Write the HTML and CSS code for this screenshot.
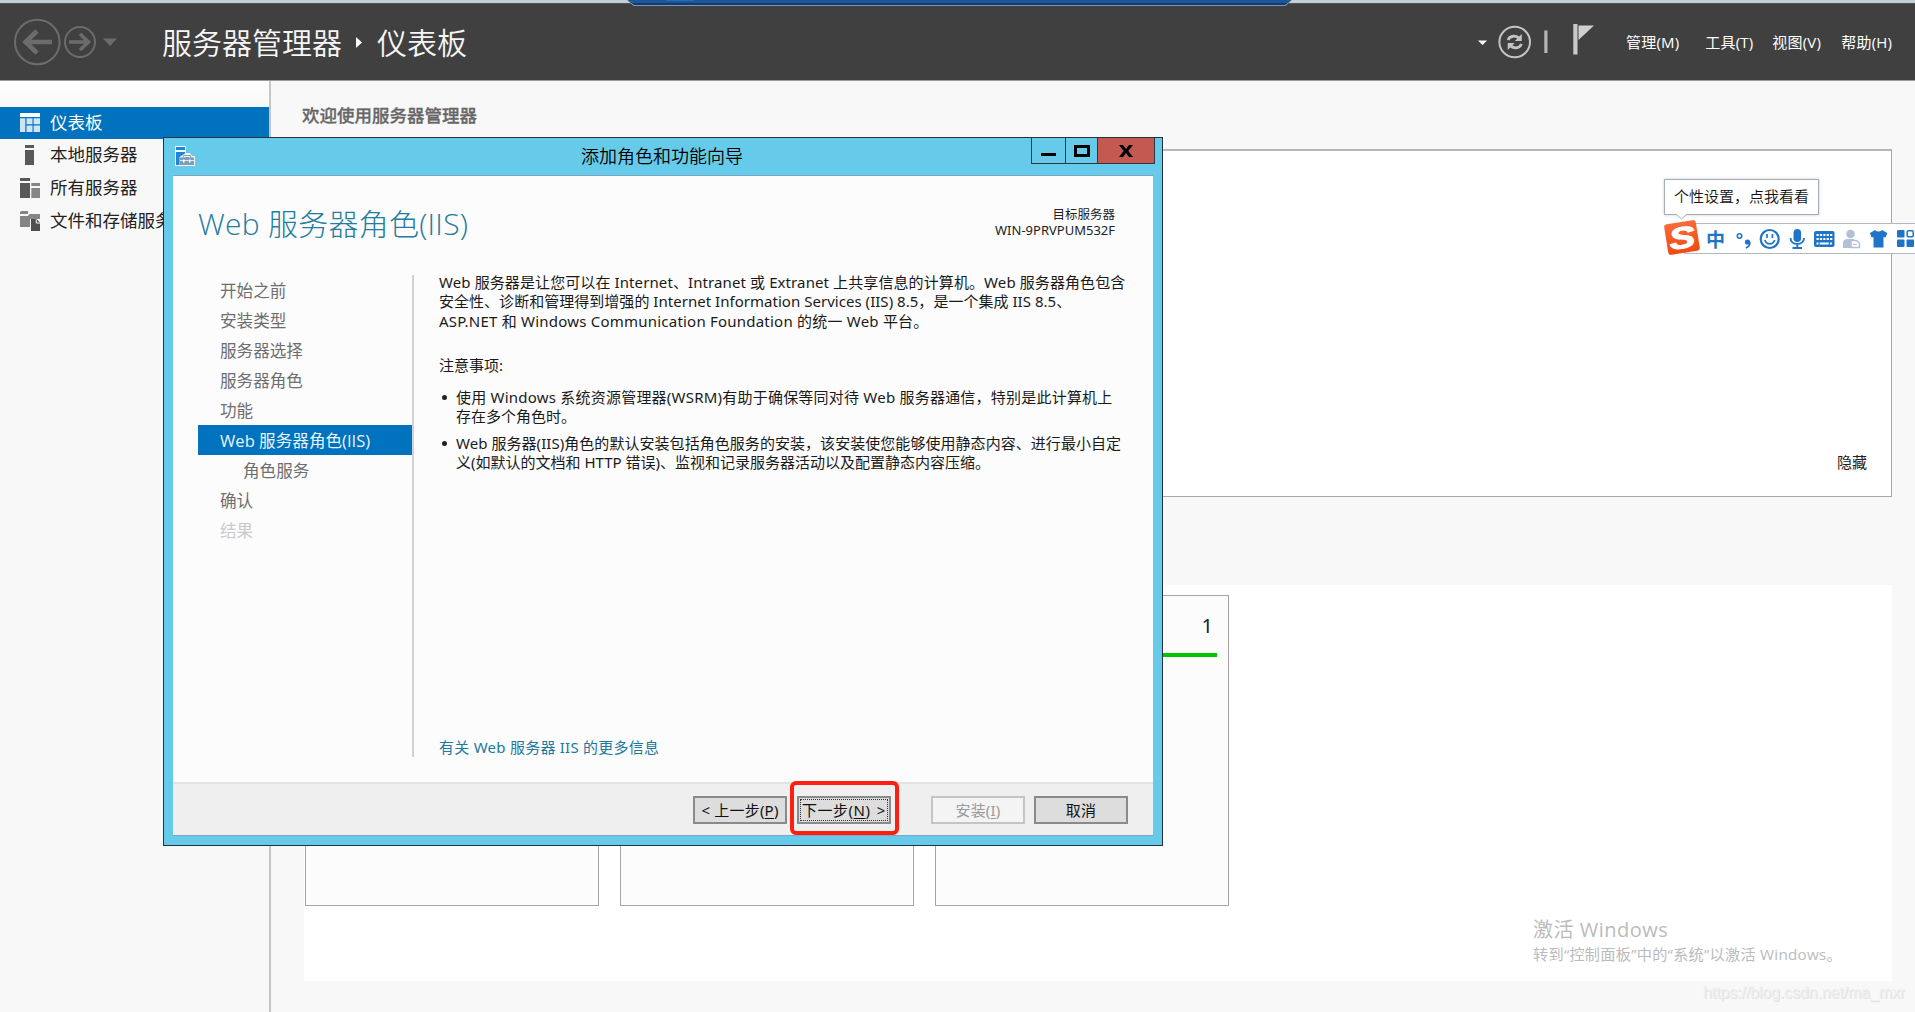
FILE: index.html
```html
<!DOCTYPE html>
<html lang="zh-CN">
<head>
<meta charset="utf-8">
<title>服务器管理器</title>
<link rel="stylesheet" href="styles.css">
</head>
<body>
<div class="screen">
  <svg class="session-tab" width="666" height="7" viewBox="0 0 666 7">
    <path d="M0 0H665L658.500 6H6.500Z" fill="#7d97b8"/>
    <path d="M1 0H664L658 5H7Z" fill="#143a70"/>
    <path d="M1 0H664L661 3H4Z" fill="#1f5694"/>
    <rect x="39" y="0" width="28" height="1" fill="#1b6fc2"/>
  </svg>

  <header class="topbar">
    <svg class="nav-arrows" width="110" height="50" viewBox="0 0 110 50" fill="none" stroke="#6c6c6c">
      <circle cx="27.300" cy="25" r="22.300" stroke-width="2"/>
      <path d="M42 25H15M27 14L15.500 25L27 36" stroke-width="4.600"/>
      <circle cx="70" cy="25" r="15" stroke-width="2"/>
      <path d="M59 25H78M70 17L78.500 25L70 33" stroke-width="3.600"/>
      <path d="M93 21.500H107L100 29Z" fill="#6c6c6c" stroke="none"/>
    </svg>
    <div class="crumbs">
      <span>服务器管理器</span>
      <svg width="6" height="11" viewBox="0 0 6 11"><path d="M0 0L6 5.500L0 11Z" fill="#fff"/></svg>
      <span>仪表板</span>
    </div>
    <svg class="tools" width="120" height="40" viewBox="0 0 120 40">
      <path d="M2 18.500H11L6.500 23Z" fill="#fff"/>
      <g fill="none" stroke="#c4c4c4">
        <circle cx="38.700" cy="20" r="15.300" stroke-width="2"/>
        <path d="M32 18C34 13.500 40 12.800 43.500 17M45.500 22C43.500 26.500 37.500 27.200 34 23" stroke-width="2.800"/>
      </g>
      <path d="M45.800 12V19H38.800ZM31.700 28V21H38.700Z" fill="#c4c4c4"/>
      <rect x="68.300" y="8.500" width="3.200" height="22.500" fill="#b5b5b5"/>
      <rect x="97.300" y="2" width="4.200" height="30.500" fill="#c9c9c9"/>
      <path d="M102.500 3.500H118L102.500 18Z" fill="#d0d0d0"/>
    </svg>
    <nav class="menus">
      <span class="m1">管理(M)</span><span class="m2">工具(T)</span><span class="m3">视图(V)</span><span class="m4">帮助(H)</span>
    </nav>
  </header>

  <div class="body">
    <aside class="sidebar">
      <div class="side-item active">
        <svg width="20" height="19" viewBox="0 0 20 19"><path d="M0 0H20V4H0Z" fill="#fff"/><path d="M0 5.300H5.300V19H0ZM6.500 5.300H12.500V11.300H6.500ZM13.600 5.300H20V11.300H13.600ZM6.500 12.500H12.500V19H6.500ZM13.600 12.500H20V19H13.600Z" fill="#cfe4f5"/></svg>
        <span>仪表板</span>
      </div>
      <div class="side-item">
        <svg width="20" height="20" viewBox="0 0 20 20"><path d="M5 0H14V3H5ZM5 5H14V20H5Z" fill="#595959"/></svg>
        <span>本地服务器</span>
      </div>
      <div class="side-item">
        <svg width="20" height="20" viewBox="0 0 20 20"><path d="M0 0H10V3H0ZM0 5H10V20H0Z" fill="#595959"/><path d="M11.300 5H20V8H11.300ZM11.300 10H20V20H11.300Z" fill="#858585"/></svg>
        <span>所有服务器</span>
      </div>
      <div class="side-item">
        <svg width="20" height="20" viewBox="0 0 20 20"><path d="M0 1.500L1 0H8V3H0ZM0 5H8L9.300 3H20V8H10V16H0Z" fill="#858585"/><path d="M11 8H16.500L20 11.500V20H11Z" fill="#4f4f4f"/><path d="M16.300 8.500V12H20" fill="none" stroke="#f8f8f8" stroke-width="1"/></svg>
        <span>文件和存储服务</span>
      </div>
    </aside>

    <main class="main">
      <h2 class="welcome">欢迎使用服务器管理器</h2>
      <section class="panel"><span class="hide-link">隐藏</span></section>
      <section class="groups">
        <div class="tiles">
          <div class="tile"></div>
          <div class="tile"></div>
          <div class="tile"><span class="count">1</span><div class="ok-bar"></div></div>
        </div>
      </section>
    </main>
  </div>

  <div class="activate">
    <div class="act-title">激活 Windows</div>
    <div class="act-text">转到“控制面板”中的“系统”以激活 Windows。</div>
  </div>
  <div class="blog-url">https://blog.csdn.net/ma_mxr</div>

  <div class="ime">
    <div class="ime-tip">个性设置，点我看看</div>
    <svg class="tip-arrow" width="12" height="6" viewBox="0 0 12 6"><path d="M0 0L5.500 5L11 0" fill="#fff" stroke="#a4adb8"/></svg>
    <div class="ime-bar">
      <span class="zh">中</span>
      <svg class="ime-icons" width="180" height="22" viewBox="0 0 180 22">
        <circle cx="4.500" cy="8" r="2.200" fill="none" stroke="#1f74c8" stroke-width="1.600"/>
        <circle cx="12.500" cy="14" r="2.600" fill="#1f74c8"/><path d="M14.800 13.500Q15.500 18 10.800 20" fill="none" stroke="#1f74c8" stroke-width="1.600"/>
        <circle cx="34.700" cy="11" r="9" fill="none" stroke="#1f74c8" stroke-width="2.200"/>
        <path d="M32 6V10M37.400 6V10M29.800 12C31.500 17.200 38 17.200 39.700 12" fill="none" stroke="#1f74c8" stroke-width="1.700"/>
        <rect x="58.500" y="1" width="7.600" height="13" rx="3.800" fill="#1f74c8"/>
        <path d="M55.500 10C55.500 18 69 18 69 10M62.300 16V19.500M57.500 20H67" fill="none" stroke="#1f74c8" stroke-width="1.900"/>
        <rect x="79" y="3" width="20.500" height="16" rx="2" fill="#1f74c8"/>
        <path d="M81.500 7H97.500M81.500 11H97.500" stroke="#fff" stroke-width="2.200" stroke-dasharray="2.200 1.200"/><path d="M81.500 15.500H97.500" stroke="#fff" stroke-width="1.800" stroke-dasharray="2 1.200 9 1.200"/>
        <g fill="#b4c0d6"><circle cx="115.500" cy="6" r="4.300"/><path d="M108 20V15Q108 11 113 11H119V20Z"/></g>
        <path d="M116 12.500H121.500L124.500 15V19.500H116Z" fill="#fff" stroke="#b4c0d6" stroke-width="1.500"/><path d="M118 16.500H122" stroke="#b4c0d6"/>
        <path d="M135 5L140 2Q143.500 5 147 2L152.300 5L150.500 9.500L148.500 9V19.500H138.500V9L136.500 9.500Z" fill="#1f74c8"/>
        <g fill="#1f74c8"><rect x="162" y="2" width="7.500" height="7.500" rx="1"/><rect x="162" y="11.500" width="7.500" height="7.500" rx="1"/><rect x="171.500" y="11.500" width="7.500" height="7.500" rx="1"/></g>
        <rect x="172.200" y="2.700" width="6" height="6" rx="1" fill="none" stroke="#1f74c8" stroke-width="1.500"/>
      </svg>
    </div>
    <div class="sogou"><span>S</span></div>
  </div>

  <div class="wizard">
    <div class="titlebar">
      <svg class="wiz-icon" width="20" height="20" viewBox="0 0 20 20">
        <path d="M0 0H11V7H15L17 10H20V20H0Z" fill="#eef7fc"/>
        <path d="M1 1H10V4H1ZM1 6H10V7.500L4.500 11V19H1Z" fill="#1f86d6"/>
        <path d="M4.500 11.500H7.500L8.500 9H15.500L16.500 11.500H19V19H4.500Z" fill="#7f9db5"/><path d="M9 11.500V10.500H14.500V11.500" stroke="#fff" fill="none"/><path d="M5 14.500H19" stroke="#dce8f0"/><rect x="8" y="13.500" width="1.500" height="3" fill="#fff"/><rect x="14" y="13.500" width="1.500" height="3" fill="#fff"/>
      </svg>
      <span class="wiz-title">添加角色和功能向导</span>
      <div class="controls">
        <div class="ctl min"><i></i></div>
        <div class="ctl max"><i></i></div>
        <div class="ctl close"><svg width="14" height="12" viewBox="0 0 14 12"><path d="M0 0H4L7 4L10 0H14L9.300 6L14 12H10L7 8L4 12H0L4.700 6Z"/></svg></div>
      </div>
    </div>
    <div class="sheet">
      <div class="head">
        <h1>Web 服务器角色(IIS)</h1>
        <div class="target"><div class="t1">目标服务器</div><div class="t2">WIN-9PRVPUM532F</div></div>
      </div>
      <div class="cols">
        <ul class="steps">
          <li>开始之前</li><li>安装类型</li><li>服务器选择</li><li>服务器角色</li><li>功能</li>
          <li class="current">Web 服务器角色(IIS)</li><li class="sub">角色服务</li><li>确认</li><li class="disabled">结果</li>
        </ul>
        <div class="content">
          <p class="intro"><span class="l1">Web 服务器是让您可以在 Internet、Intranet 或 Extranet 上共享信息的计算机。Web 服务器角色包含</span><span class="l2">安全性、诊断和管理得到增强的 Internet Information Services (IIS) 8.5，是一个集成 IIS 8.5、</span><span class="l3">ASP.NET 和 Windows Communication Foundation 的统一 Web 平台。</span></p>
          <p class="note">注意事项:</p>
          <ul class="notes">
            <li><span class="l4">使用 Windows 系统资源管理器(WSRM)有助于确保等同对待 Web 服务器通信，特别是此计算机上</span><span class="l5">存在多个角色时。</span></li>
            <li><span class="l6">Web 服务器(IIS)角色的默认安装包括角色服务的安装，该安装使您能够使用静态内容、进行最小自定</span><span class="l7">义(如默认的文档和 HTTP 错误)、监视和记录服务器活动以及配置静态内容压缩。</span></li>
          </ul>
          <a class="more">有关 Web 服务器 IIS 的更多信息</a>
        </div>
      </div>
      <div class="footer">
        <button class="btn prev">&lt; 上一步(<u>P</u>)</button>
        <button class="btn next">下一步(<u>N</u>) &gt;</button>
        <button class="btn install" disabled>安装(<u>I</u>)</button>
        <button class="btn cancel">取消</button>
        <div class="mark"></div>
      </div>
    </div>
  </div>
</div>
</body>
</html>
```
FILE: styles.css
```css
* { box-sizing: border-box; }
body { margin: 0; font-family: "Noto Sans", "Noto Sans CJK SC", sans-serif; }
h1, h2, p, ul { margin: 0; padding: 0; font-weight: 400; list-style: none; }
svg { display: block; flex: none; }
.screen { position: relative; width: 1915px; height: 1012px; overflow: hidden; background: linear-gradient(#bed0d8 3px, #f8f8f8 3px); display: flex; flex-direction: column; padding-top: 3px; }
.session-tab { position: absolute; left: 627px; top: 0; z-index: 2; }

.topbar { height: 78px; flex: none; background: #404040; border-bottom: 1px solid #9d9999; border-top: 1px solid #565656; display: flex; align-items: center; color: #fff; font-family: "Open Sans", "Noto Sans CJK SC", sans-serif; }
.nav-arrows { margin-left: 10px; }
.crumbs { margin-left: 42px; width: 421px; display: flex; align-items: center; font-size: 30px; font-weight: 350; line-height: 40px; color: #f6f6f6; }
.crumbs span { padding-top: 1px; }
.crumbs svg { margin: 0 15px 0 14px; }
.tools { margin-left: 893px; }
.menus { display: flex; font-size: 15px; line-height: 20px; white-space: nowrap; }
.menus span { letter-spacing: .2px; }
.m1 { width: 79.300px; margin-left: 30px; }
.m2 { width: 67px; }
.m3 { width: 69px; }

.body { flex: 1; display: flex; min-height: 0; }
.sidebar { width: 271px; flex: none; padding-top: 25.500px; border-right: 2px solid #c6c6c6; background: linear-gradient(#fefefe, #f8f8f8 26px); }
.side-item { height: 32.600px; display: flex; align-items: center; gap: 10px; padding-left: 20px; font-size: 17.500px; color: #222; white-space: nowrap; line-height: 30px; }
.side-item span { position: relative; top: -1px; }
.side-item.active { background: #0072be; color: #fff; }
.main { flex: 1; padding: 20px 23px 0 33px; display: flex; flex-direction: column; }
.welcome { font-size: 17.500px; line-height: 28px; color: #666; font-weight: 500; margin-left: -2px; -webkit-text-stroke: .3px #666; }
.panel { height: 348px; margin-top: 20px; background: #fff; border: 1.500px solid #a8a8a8; border-top: 2px solid #b6b6b6; display: flex; justify-content: flex-end; align-items: flex-end; padding: 0 24px 23px; }
.hide-link { font-size: 15px; line-height: 22px; color: #222; }
.groups { height: 396px; margin-top: 88px; background: #fff; padding: 10px 1px; }
.tiles { display: grid; grid-template-columns: repeat(3, 294px); gap: 21px; }
.tile { height: 311px; background: #fcfcfc; border: 1.500px solid #a4a4a4; padding: 16px 11px; display: flex; flex-direction: column; }
.count { align-self: flex-end; font-size: 20px; line-height: 28px; color: #222; padding-right: 4px; }
.ok-bar { height: 4px; margin-top: 13px; background: #00c400; }

.activate { position: absolute; left: 1533px; top: 916px; color: #bbb; font-family: "Open Sans", "Noto Sans CJK SC", sans-serif; white-space: nowrap; }
.act-title { font-size: 20px; line-height: 28px; letter-spacing: .5px; }
.act-text { font-size: 15.200px; line-height: 20px; letter-spacing: .25px; }
.blog-url { position: absolute; right: 10px; top: 983px; font: 16px/20px "Liberation Sans", sans-serif; letter-spacing: -.12px; color: #efefef; text-shadow: 1px 1px 0 #e2e2e2; white-space: nowrap; }

.ime { position: absolute; left: 1664px; top: 179px; width: 251px; height: 80px; }
.ime-tip { width: 155px; height: 36px; background: #fff; border: 1px solid #a4adb8; box-shadow: 0 0 3px #ccc; font-size: 15px; line-height: 31px; padding-left: 9px; color: #111; white-space: nowrap; font-family: "Noto Sans CJK SC", sans-serif; font-weight: 350; }
.tip-arrow { position: relative; margin: -1px 0 0 12px; z-index: 1; }
.ime-bar { margin: 3px 0 0 20px; height: 31px; background: #fff; border: 1px solid #b4b9bf; border-right: 0; display: flex; align-items: center; padding-left: 21px; overflow: hidden; }
.zh { width: 30px; color: #1f74c8; font: 700 19px/28px "Noto Sans CJK SC", sans-serif; }
.sogou { position: absolute; left: 2px; top: 43px; width: 32px; height: 31px; background: linear-gradient(#f86b38, #f04a14); border-radius: 3px; transform: rotate(-9deg); color: #fff; display: flex; align-items: center; justify-content: center; }
.sogou span { font: italic 700 30px/31px "Liberation Sans", sans-serif; transform: scaleX(1.300); -webkit-text-stroke: 1px #fff; }

.wizard { position: absolute; left: 163px; top: 137px; width: 1000px; height: 709px; background: #66caea; border: 1px solid #25323a; padding: 0 9px 9px; display: flex; flex-direction: column; z-index: 3; }
.titlebar { height: 37px; flex: none; display: flex; align-items: flex-start; }
.wiz-icon { margin: 8px 0 0 2px; }
.wiz-title { margin-left: 386px; width: 450px; font-size: 18px; line-height: 37px; color: #000; font-weight: 350; }
.controls { display: flex; height: 26px; margin-left: 1px; margin-right: -2px; border: 1px solid #2a3940; border-top: 0; }
.ctl { display: flex; align-items: center; justify-content: center; flex: none; }
.ctl + .ctl { border-left: 1px solid #2a3940; }
.min { width: 33px; padding-top: 7px; }
.min i { width: 15px; height: 3px; background: #000; }
.max { width: 32px; }
.max i { width: 16px; height: 12px; border: 3px solid #000; }
.close { width: 57px; background: #c35950; }
.sheet { flex: 1; background: #fcfcfc; border-top: 1px solid #7ba5bc; border-bottom: 1px solid #83a6b9; display: flex; flex-direction: column; min-height: 0; }
.head { height: 99px; flex: none; display: flex; justify-content: space-between; padding: 28px 38px 0 25px; }
.head h1 { font: 300 30px/40px "Open Sans", "Noto Sans CJK SC", sans-serif; color: #247c9e; white-space: nowrap; letter-spacing: .25px; }
.target { text-align: right; line-height: 15.500px; padding-top: 3px; color: #222; white-space: nowrap; }
.t1 { font-size: 12.500px; }
.t2 { font-size: 13px; }
.cols { flex: 1; display: flex; min-height: 0; }
.steps { margin-left: 25px; width: 216px; height: 482px; border-right: 2px solid #d2d2d2; font: 16.600px/32px "Open Sans", "Noto Sans CJK SC", sans-serif; color: #6e6e6e; }
.steps li { height: 30px; padding-left: 22px; width: 214px; white-space: nowrap; }
.steps li.current { background: #0072be; color: #e8f4fc; line-height: 31px; }
.steps li.sub { padding-left: 45px; }
.steps li.disabled { color: #cacaca; }
.content { margin: -2px 0 0 25px; font-size: 15px; line-height: 19.400px; color: #1a1a1a; height: 484px; display: flex; flex-direction: column; align-items: flex-start; }
.content span { display: block; white-space: nowrap; width: max-content; }
.content .l1 { letter-spacing: .1px; }
.content .l2 { letter-spacing: .03px; }
.content .l3 { letter-spacing: .22px; }
.content .l4 { letter-spacing: .22px; }
.content .l6 { letter-spacing: .05px; }
.note { margin-top: 24.500px; }
.notes { margin-top: 12.500px; }
.notes li { position: relative; padding-left: 17px; margin-bottom: 7.500px; }
.notes li::before { content: ""; position: absolute; left: 3px; top: 7px; width: 5px; height: 5px; border-radius: 50%; background: #222; }
.more { margin-top: auto; color: #1d799d; white-space: nowrap; letter-spacing: .25px; }
.footer { position: relative; height: 53px; flex: none; background: #efefef; border-top: 2px solid #e3e3e3; display: flex; align-items: flex-start; padding: 12px 0 0 520px; }
.btn { width: 94px; height: 28px; padding: 0; font: 15px/24px "Noto Sans", "Noto Sans CJK SC", sans-serif; background: #ddd; border: 2px solid #8a8a8a; color: #111; white-space: pre; display: flex; justify-content: center; align-items: center; letter-spacing: .2px; }
.btn u { text-underline-offset: 2px; text-decoration-thickness: 1px; }
.next { margin-left: 10px; outline: 1px dotted #333; outline-offset: -4px; letter-spacing: .5px; word-spacing: 2px; }
.install { margin-left: 40px; background: #f4f4f4; border-color: #c4c4c4; color: #999; }
.cancel { margin-left: 9px; }
.mark { position: absolute; left: 617px; top: -3px; width: 109px; height: 54px; border: 4px solid #ff1f10; border-radius: 6px; }
```
